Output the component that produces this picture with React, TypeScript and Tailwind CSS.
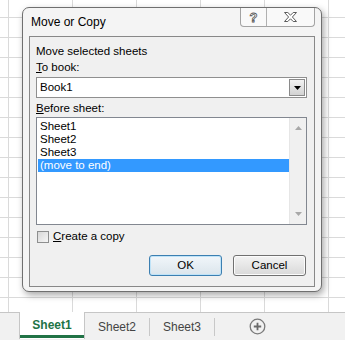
const font = { fontFamily: '"Liberation Sans", Arial, sans-serif' };

const SheetTab = ({ name }: { name: string }) => (
  <div className="w-[64px] h-full flex items-center justify-center text-[12px] text-[#444]">{name}</div>
);

const Divider = () => <div className="w-px h-[18px] bg-[#c8c8c8] self-center" />;

const MoveOrCopyDialog = () => {
  const items = ['Sheet1', 'Sheet2', 'Sheet3', '(move to end)'];
  return (
    <div className="absolute left-[22px] top-[7px] w-[300px] h-[285px] rounded-[7px] border border-[#6f6f6f] bg-[#f4f4f4] shadow-[2px_3px_7px_rgba(0,0,0,0.35)] flex flex-col">
      {/* title bar */}
      <div className="h-[28px] flex items-start justify-between">
        <div className="pl-[8px] pt-[6px] text-[12px] leading-[16px] text-black">Move or Copy</div>
        <div className="mr-[6px] w-[75px] h-[19px] flex border-x border-b border-[#a3a3a3] rounded-b-[4px] bg-[#f9f9f9]">
          <div className="w-[26px] h-full border-r border-[#b0b0b0] flex items-center justify-center">
            <span className="text-[13px] font-bold leading-none text-white [-webkit-text-stroke:0.8px_#555]">?</span>
          </div>
          <div className="flex-1 flex items-center justify-center">
            <svg width="13" height="10" viewBox="0 0 13 10">
              <polygon
                points="0.5,0.5 3.8,0.5 6.5,3.2 9.2,0.5 12.5,0.5 8.4,5 12.5,9.5 9.2,9.5 6.5,6.8 3.8,9.5 0.5,9.5 4.6,5"
                fill="#fff"
                stroke="#5c5c5c"
                strokeWidth="1"
              />
            </svg>
          </div>
        </div>
      </div>

      {/* client area */}
      <div className="mx-[6px] mb-[4px] flex-1 border border-[#888] bg-[#f0f0f0] pt-[6px] pl-[6px] pr-[7px] flex flex-col text-[11.5px] text-black">
        <div className="leading-[16px]">Move selected sheets</div>
        <div className="leading-[16px]"><u>T</u>o book:</div>
        <div className="mt-[2px] h-[21px] border border-[#8f8f8f] bg-white flex items-center">
          <span className="pl-[3px] flex-1">Book1</span>
          <div className="w-[16px] h-[17px] mr-[1px] border border-[#8a8a8a] bg-linear-to-b from-[#f2f2f2] to-[#d2d2d2] flex items-center justify-center">
            <svg width="7" height="4" viewBox="0 0 7 4"><polygon points="0,0 7,0 3.5,4" fill="#000" /></svg>
          </div>
        </div>
        <div className="mt-[2px] leading-[16px]"><u>B</u>efore sheet:</div>
        <div className="mt-[1px] h-[108px] border border-[#828790] bg-white flex">
          <div className="flex-1 pt-[2px] pl-px">
            {items.map((it, i) => (
              <div
                key={it}
                className={`h-[13px] leading-[13px] pl-[2px] ${i === 3 ? 'bg-[#3399ff] text-white' : ''}`}
              >
                {it}
              </div>
            ))}
          </div>
          <div className="w-[17px] bg-[#f0f0f0] border-l border-[#e6e6e6] flex flex-col items-center justify-between py-[8px]">
            <svg width="7" height="4" viewBox="0 0 7 4"><polygon points="0,4 7,4 3.5,0" fill="#a8a8a8" /></svg>
            <svg width="7" height="4" viewBox="0 0 7 4"><polygon points="0,0 7,0 3.5,4" fill="#a8a8a8" /></svg>
          </div>
        </div>
        <div className="mt-[5px] h-[13px] flex items-center gap-[4px]">
          <div className="ml-px w-[12px] h-[12px] border border-[#8e8f8f] bg-linear-to-br from-[#d8d8d8] to-[#f6f6f6]" />
          <span><u>C</u>reate a copy</span>
        </div>
        <div className="mt-[12px] mr-px flex justify-end gap-[11px]">
          <button className="w-[73px] h-[21px] rounded-[3px] border border-[#3c7fb1] bg-linear-to-b from-[#f1f6fa] to-[#dbe5ec] shadow-[inset_0_0_0_1px_#bfe3f8] text-[11.5px] text-black">
            OK
          </button>
          <button className="w-[73px] h-[21px] rounded-[3px] border border-[#707070] bg-linear-to-b from-[#f3f3f3] to-[#d9d9d9] shadow-[inset_0_0_0_1px_#fcfcfc] text-[11.5px] text-black">
            Cancel
          </button>
        </div>
      </div>
    </div>
  );
};

export default function App() {
  return (
    <div className="relative w-[345px] h-[340px] overflow-hidden bg-white flex flex-col" style={font}>
      <div className="flex-1 bg-[linear-gradient(to_right,#dadada_1px,transparent_1px),linear-gradient(to_bottom,#dadada_1px,transparent_1px)] bg-[size:64px_20px] bg-[position:8px_17px]" />
      <div className="h-[28px] border-t border-[#c6c6c6] bg-[#f1f1f1] flex">
        <div className="w-[19px]" />
        <div className="w-[66px] h-full bg-white border-x border-[#c6c6c6] -mt-px flex flex-col">
          <div className="flex-1 flex items-center justify-center text-[12px] font-bold text-[#217346] pt-[2px]">Sheet1</div>
          <div className="h-[3px] bg-[#217346] mb-px" />
        </div>
        <SheetTab name="Sheet2" />
        <Divider />
        <SheetTab name="Sheet3" />
        <Divider />
        <div className="w-[51px] h-full flex items-center justify-end">
          <svg width="17" height="17" viewBox="0 0 17 17">
            <circle cx="8.5" cy="8.5" r="7.3" fill="none" stroke="#7a7a7a" strokeWidth="1.3" />
            <path d="M8.5 4.8v7.4M4.8 8.5h7.4" stroke="#6a6a6a" strokeWidth="1.8" />
          </svg>
        </div>
      </div>
      <MoveOrCopyDialog />
    </div>
  );
}
